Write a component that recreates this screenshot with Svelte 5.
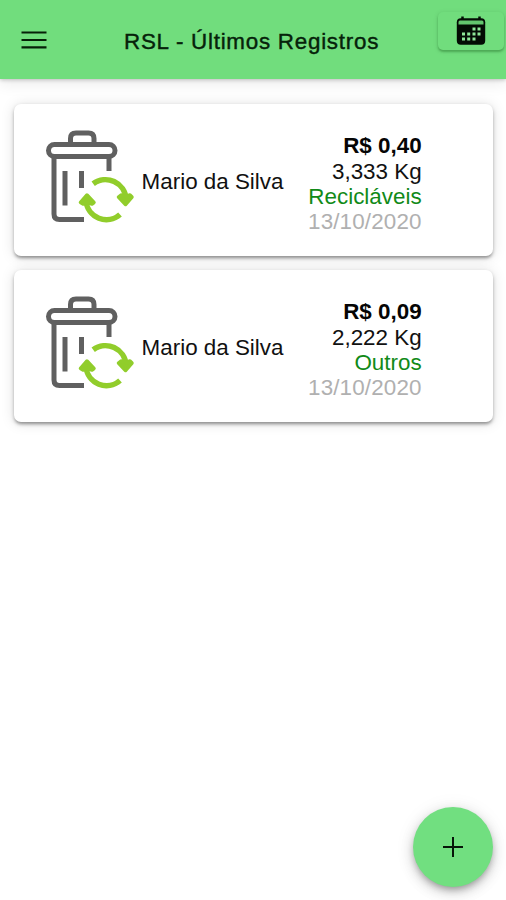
<script>
  const records = [
    { name: 'Mario da Silva', price: 'R$ 0,40', weight: '3,333 Kg', kind: 'Recicláveis', date: '13/10/2020' },
    { name: 'Mario da Silva', price: 'R$ 0,09', weight: '2,222 Kg', kind: 'Outros', date: '13/10/2020' }
  ];
</script>

<div class="screen">
  <header>
    <button class="menu" aria-label="Menu">
      <svg width="26" height="18" viewBox="0 0 26 18"><path d="M.5 1.500h25M.5 9h25M.5 16.300h25" stroke="#062008" stroke-width="2.200" /></svg>
    </button>
    <h1>RSL - Últimos Registros</h1>
    <button class="calendar" aria-label="Calendário">
      <svg width="30" height="30" viewBox="0 0 30 30">
        <path d="M6.500 .5v4M23.500 .5v4" stroke="#041006" stroke-width="2.500" />
        <rect x=".8" y="2.200" width="28.400" height="26.500" rx="4" fill="#030c04" />
        <path d="M4 4.500h22q1.500 0 1.500 1.500V8.500H2.500V6q0-1.500 1.500-1.500z" fill="#63c66e" />
        <g fill="#8ee897">
          <rect x="16.500" y="11.500" width="3" height="3" /><rect x="21.500" y="11.500" width="3" height="3" />
          <rect x="6" y="16.500" width="3" height="3" /><rect x="11.200" y="16.500" width="3" height="3" /><rect x="16.500" y="16.500" width="3" height="3" /><rect x="21.500" y="16.500" width="3" height="3" />
          <rect x="6" y="21.500" width="3" height="3" /><rect x="11.200" y="21.500" width="3" height="3" /><rect x="16.500" y="21.500" width="3" height="3" />
        </g>
      </svg>
    </button>
  </header>

  <main>
    {#each records as record}
      <article>
        <svg class="bin" width="90" height="94" viewBox="0 0 90 94" fill="none">
          <g stroke="#606060" stroke-width="5">
            <path d="M25.500 14V8.500q0-5.500 5.500-5.500h12.500q5.500 0 5.500 5.500V14" />
            <rect x="3.500" y="14.500" width="66.500" height="12" rx="6" />
            <path d="M9 27V84q0 5.500 5.500 5.500H39M64 27v14M20 41v34.500M36.500 41v17" />
          </g>
          <g stroke="#91cd2b" stroke-width="5.500">
            <path d="M48.200 53.800A20.500 20.500 0 0 1 81 69" />
            <path d="M75 84.500A20.500 20.500 0 0 1 41 71" />
          </g>
          <g fill="#91cd2b" stroke="#91cd2b" stroke-width="3.500" stroke-linejoin="round">
            <path d="M73.500 67l2.500-2 5 1.500 4-1.500 2 2-6.500 7.500z" />
            <path d="M35.500 72.500l6.500-7.500 7 7.500-2 1.500-5-1.500-4 1.500z" />
          </g>
        </svg>
        <span class="name">{record.name}</span>
        <div class="details">
          <strong>{record.price}</strong>
          <span>{record.weight}</span>
          <span class="kind">{record.kind}</span>
          <span class="date">{record.date}</span>
        </div>
      </article>
    {/each}
  </main>

  <button class="add" aria-label="Adicionar">
    <svg width="22" height="22" viewBox="0 0 22 22"><path d="M1 11h20M11 1v20" stroke="#071609" stroke-width="2" /></svg>
  </button>
</div>

<style>
  :global(body) { margin: 0; background: #fff; }
  .screen {
    position: relative;
    box-sizing: border-box;
    width: 100%;
    height: 900px;
    overflow: hidden;
    font: 22.4px/25.4px "Liberation Sans", Arial, sans-serif;
    color: #111;
    background: #fff;
  }
  button { border: 0; padding: 0; background: none; }
  svg { display: block; }
  header {
    display: flex;
    align-items: flex-start;
    height: 79px;
    background: #71dd7d;
    box-shadow: 0 1px 4px rgba(0, 0, 0, .22), 0 5px 14px rgba(0, 0, 0, .08);
  }
  .menu { margin: 31px 0 0 21px; }
  h1 {
    flex: 1;
    margin: 29px 0 0 77px;
    font-size: 22.4px;
    font-weight: 400;
    letter-spacing: .74px;
    white-space: nowrap;
    color: #06220a;
    -webkit-text-stroke: .4px #06220a;
  }
  .calendar {
    display: flex;
    justify-content: center;
    width: 66px;
    height: 38px;
    margin: 12px 2px 0 0;
    padding-top: 4px;
    box-sizing: border-box;
    border-radius: 5px;
    background: #71dd7d;
    box-shadow: 0 2px 2px rgba(0, 60, 0, .25), 0 1px 5px rgba(0, 60, 0, .14);
  }
  main {
    display: flex;
    flex-direction: column;
    gap: 14px;
    padding: 104px 13px 0 14px;
    margin-top: -79px;
  }
  article {
    display: flex;
    box-sizing: border-box;
    height: 152px;
    padding-left: 31px;
    border-radius: 7px;
    background: #fff;
    box-shadow: 0 3px 3px -1px rgba(0, 0, 0, .25), 0 2px 4px rgba(0, 0, 0, .2), 0 1px 14px rgba(0, 0, 0, .13);
  }
  .bin { flex: none; margin-top: 26px; }
  .name { width: 144px; margin: 65px 0 0 6.6px; white-space: nowrap; }
  .details {
    display: flex;
    flex-direction: column;
    width: 136px;
    margin-top: 29.2px;
    text-align: right;
    white-space: nowrap;
  }
  strong { color: #050505; }
  .kind { color: #118a18; }
  .date { color: #b0b0b0; letter-spacing: .15px; }
  .add {
    position: absolute;
    right: 13px;
    bottom: 13px;
    display: flex;
    align-items: center;
    justify-content: center;
    width: 80px;
    height: 80px;
    border-radius: 50%;
    background: #71df80;
    box-shadow: 0 4px 7px -2px rgba(0, 0, 0, .3), 0 5px 13px rgba(0, 0, 0, .17), 0 2px 20px rgba(0, 0, 0, .08);
  }
</style>
